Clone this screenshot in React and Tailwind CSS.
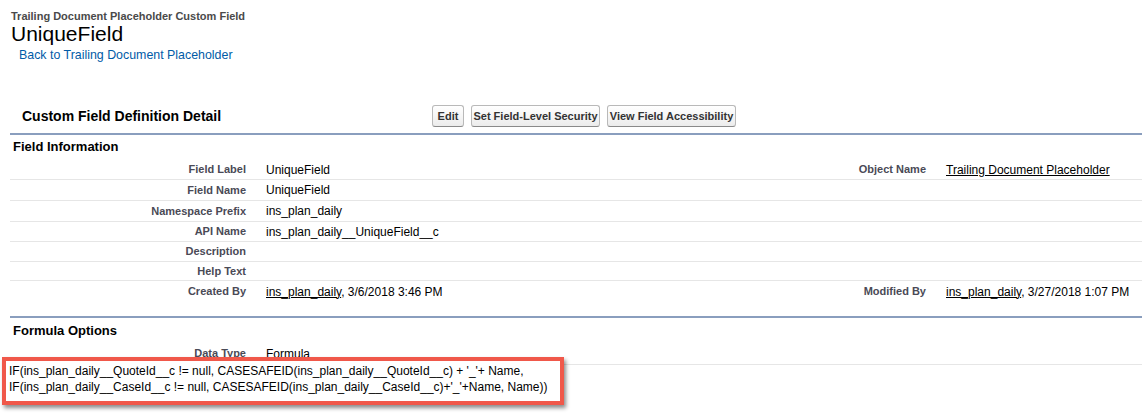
import React from 'react';

const leftRows = [
  { label: 'Field Label', value: 'UniqueField', h: 'h-[20px]' },
  { label: 'Field Name', value: 'UniqueField', h: 'h-[21px]' },
  { label: 'Namespace Prefix', value: 'ins_plan_daily', h: 'h-[21px]' },
  { label: 'API Name', value: 'ins_plan_daily__UniqueField__c', h: 'h-[20px]' },
  { label: 'Description', value: '', h: 'h-[20px]' },
  { label: 'Help Text', value: '', h: 'h-[19px]' },
];

const Button = ({ children, w }) => (
  <button
    className={`${w} h-[22px] flex items-center justify-center whitespace-nowrap rounded-[3px] border border-[#b9b9b9] border-b-[#8a8a8a] bg-gradient-to-b from-white to-[#ececec] text-[11px] font-bold text-[#333]`}
  >
    {children}
  </button>
);

const Label = ({ children }) => (
  <div className="w-[246px] pr-[10px] text-right text-[11px] font-bold text-[#4a4a56]">{children}</div>
);

const App = () => {
  return (
    <div className="relative w-[1142px] h-[413px] overflow-hidden bg-white text-black font-['Liberation_Sans',Arial,sans-serif]">
      {/* Page title */}
      <div className="pl-[11px] pt-[10px]">
        <div className="text-[11px] leading-[12px] font-bold text-[#4a4a4a]">
          Trailing Document Placeholder Custom Field
        </div>
        <h1 className="text-[21px] leading-[24px] font-normal">UniqueField</h1>
        <a className="block ml-[8px] mt-[2px] text-[12.4px] leading-[14px] text-[#015ba7]">
          Back to Trailing Document Placeholder
        </a>
      </div>

      {/* Detail header */}
      <div className="ml-[10px] mt-[43px] flex items-center border-b-2 border-[#8a9ebe] pb-[6px]">
        <h2 className="w-[422px] pl-[12px] text-[14px] font-bold">Custom Field Definition Detail</h2>
        <div className="flex gap-[7px]">
          <Button w="w-[32px]">Edit</Button>
          <Button w="w-[129px]">Set Field-Level Security</Button>
          <Button w="w-[129px]">View Field Accessibility</Button>
        </div>
      </div>

      {/* Field Information */}
      <div className="ml-[10px]">
        <h3 className="pl-[3px] pt-[4px] pb-[5px] text-[13px] leading-[16px] font-bold">Field Information</h3>
        {leftRows.map((row, i) => (
          <div key={row.label} className={`${row.h} flex items-center border-b border-[#e6e6e6] text-[12px]`}>
            <Label>{row.label}</Label>
            <div className="w-[520px] pl-[10px]">{row.value}</div>
            {i === 0 && (
              <>
                <div className="w-[160px] pr-[10px] text-right text-[11px] font-bold text-[#4a4a56]">Object Name</div>
                <div className="pl-[10px] underline">Trailing Document Placeholder</div>
              </>
            )}
          </div>
        ))}
        <div className="h-[21px] flex items-center text-[12px]">
          <Label>Created By</Label>
          <div className="w-[520px] pl-[10px]">
            <span className="underline">ins_plan_daily</span>, 3/6/2018 3:46 PM
          </div>
          <div className="w-[160px] pr-[10px] text-right text-[11px] font-bold text-[#4a4a56]">Modified By</div>
          <div className="pl-[10px]">
            <span className="underline">ins_plan_daily</span>, 3/27/2018 1:07 PM
          </div>
        </div>
      </div>

      {/* Formula Options */}
      <div className="ml-[10px] mt-[14px] border-t-2 border-[#8a9ebe]">
        <h3 className="pl-[3px] pt-[5px] pb-[4px] text-[13px] leading-[16px] font-bold">Formula Options</h3>
        <div className="h-[22px] flex items-center border-b border-[#e6e6e6] text-[12px]">
          <Label>Data Type</Label>
          <div className="pl-[10px]">Formula</div>
        </div>
      </div>

      {/* Highlighted formula */}
      <div className="absolute left-[2px] top-[357px] w-[562px] h-[48px] border-[4px] border-[#f0584a] bg-white pl-[3px] pt-[2px] text-[12px] leading-[16px] shadow-[2px_3px_4px_rgba(0,0,0,0.45)]">
        <div>IF(ins_plan_daily__QuoteId__c != null, CASESAFEID(ins_plan_daily__QuoteId__c) + '_'+ Name,</div>
        <div>IF(ins_plan_daily__CaseId__c != null, CASESAFEID(ins_plan_daily__CaseId__c)+'_'+Name, Name))</div>
      </div>
    </div>
  );
};

export default App;
